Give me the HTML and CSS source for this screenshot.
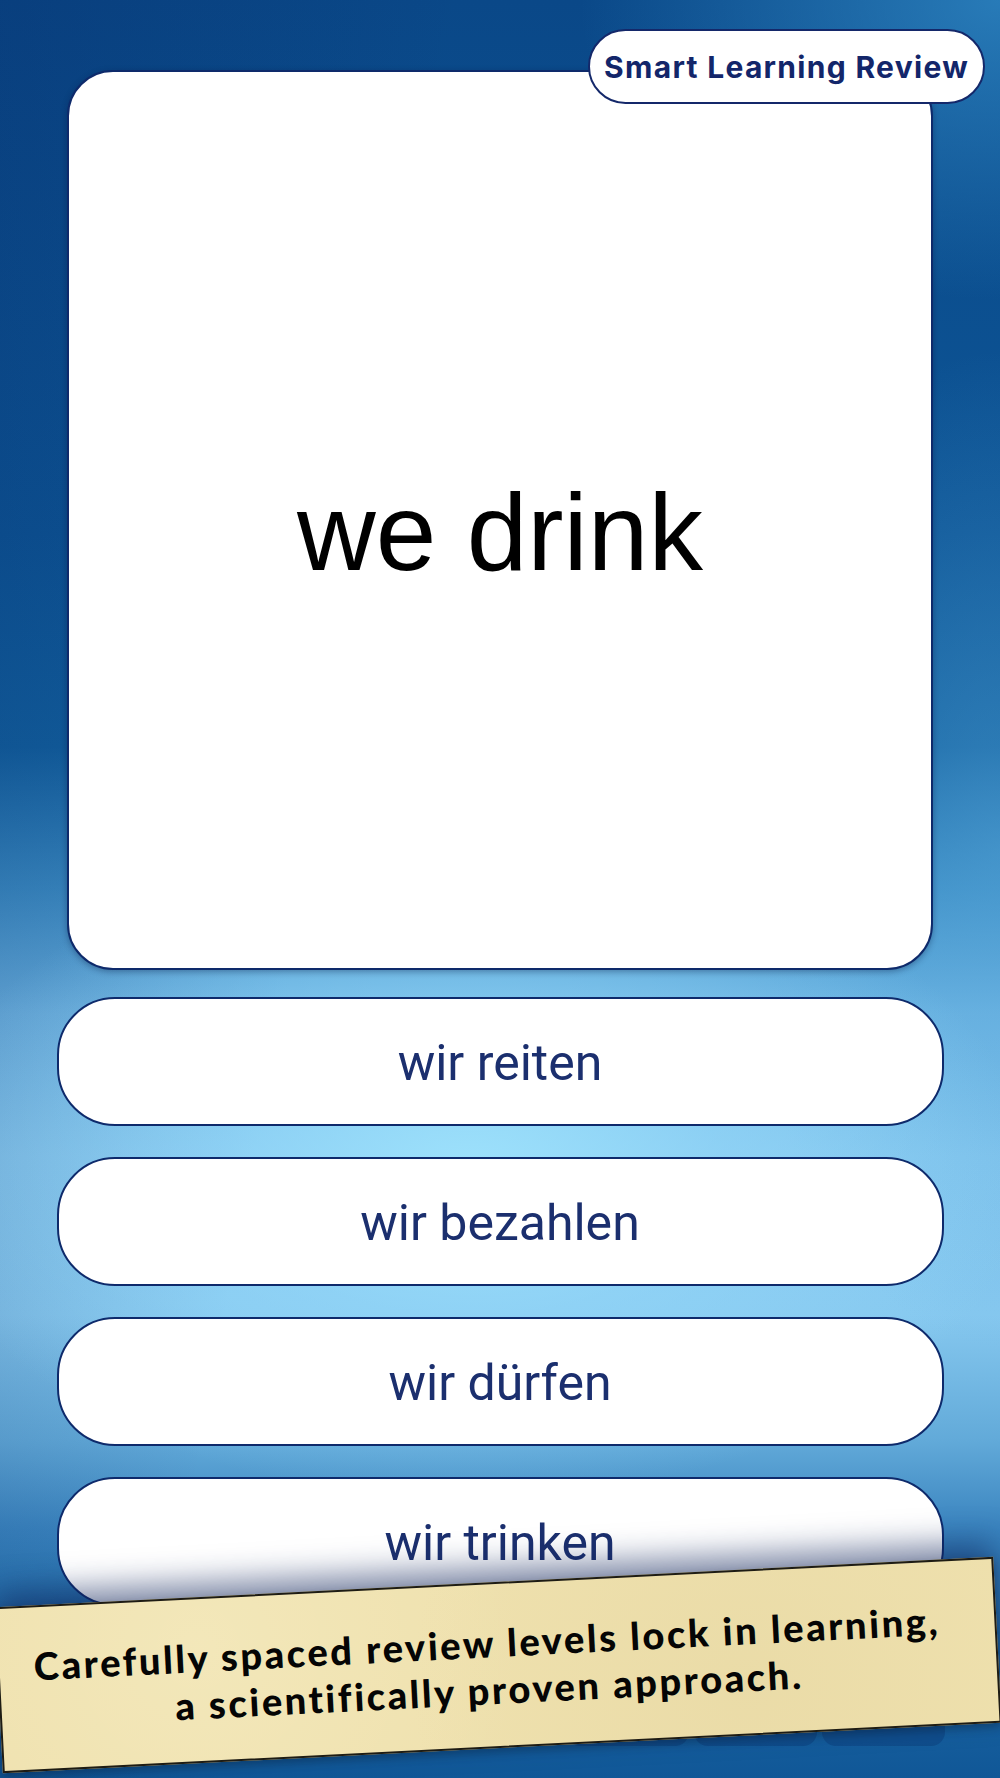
FILE: index.html
```html
<!DOCTYPE html>
<html lang="en">
<head>
<meta charset="utf-8">
<title>Smart Learning Review</title>
<link rel="stylesheet" href="styles.css">
</head>
<body>
<div class="screen">
  <div class="card">
    <div class="prompt">we drink</div>
  </div>
  <div class="badge">Smart Learning Review</div>
  <div class="options">
    <div class="option">wir reiten</div>
    <div class="option">wir bezahlen</div>
    <div class="option">wir dürfen</div>
    <div class="option">wir trinken</div>
  </div>
  <div class="tabbar">
    <span class="tab"></span><span class="tab"></span><span class="tab"></span><span class="tab"></span><span class="tab"></span><span class="tab"></span><span class="tab"></span>
  </div>
  <div class="note">
    <p>Carefully spaced review levels lock in learning,<br>a scientifically proven approach.</p>
  </div>
</div>
</body>
</html>
```

FILE: styles.css
```css
* { box-sizing: border-box; }
html, body { margin: 0; padding: 0; }
body { width: 1000px; height: 1778px; overflow: hidden; }

.screen {
  position: relative;
  width: 1000px;
  height: 1778px;
  overflow: hidden;
  display: flex;
  flex-direction: column;
  align-items: center;
  background:
    radial-gradient(ellipse 560px 330px at 470px 1170px, rgba(160, 228, 253, 0.9) 0%, rgba(150, 218, 250, 0.55) 45%, rgba(140, 210, 245, 0) 100%),
    radial-gradient(ellipse 420px 300px at 1000px 0px, rgba(50, 140, 200, 0.75) 0%, rgba(50, 140, 200, 0) 100%),
    radial-gradient(ellipse 260px 500px at 1000px 850px, rgba(90, 170, 220, 0.45) 0%, rgba(90, 170, 220, 0) 100%),
    linear-gradient(100deg, rgba(5, 35, 95, 0.25) 0%, rgba(5, 35, 95, 0) 35%),
    linear-gradient(180deg, #0a4888 0%, #0d5596 30%, #12609f 42%, #3b8cc4 50%, #6cb3e2 57%, #84c6ee 65%, #86c8ef 74%, #62aad9 81%, #3a84bf 86%, #1f6aa6 92%, #105797 100%);
  font-family: "Liberation Sans", Arial, sans-serif;
}

.card {
  width: 866px;
  height: 900px;
  margin-top: 70px;
  background: #ffffff;
  border: 2.5px solid #0e2a6b;
  border-radius: 46px;
  box-shadow: 0 2px 6px rgba(0, 20, 60, 0.35);
  display: flex;
  align-items: center;
  justify-content: center;
  padding-top: 26px;
}

.prompt {
  font-family: "Liberation Sans", Arial, sans-serif;
  font-size: 109px;
  line-height: 1.15;
  color: #000;
}

.badge {
  position: absolute;
  left: 588px;
  top: 29px;
  width: 397px;
  height: 75px;
  background: #fff;
  border: 2px solid #14286a;
  border-radius: 38px;
  display: flex;
  align-items: center;
  justify-content: center;
  font-family: Inter, "Liberation Sans", sans-serif;
  font-weight: 700;
  font-size: 30px;
  color: #13266a;
  letter-spacing: 1.3px;
  padding-top: 1px;
}

.options {
  margin-top: 27px;
  width: 887px;
  display: flex;
  flex-direction: column;
  gap: 31px;
}

.option {
  height: 129px;
  background: #fff;
  border: 2.5px solid #0e2a6b;
  border-radius: 58px;
  display: flex;
  align-items: center;
  justify-content: center;
  font-family: Roboto, "Liberation Sans", sans-serif;
  font-size: 50px;
  color: #1b2f6e;
  padding-top: 2px;
}

.tabbar {
  margin-top: 84px;
  width: 889px;
  height: 56px;
  display: flex;
  gap: 5px;
}

.tab {
  flex: 1;
  background: rgba(10, 50, 110, 0.35);
  border-radius: 14px;
}

.note {
  position: absolute;
  left: -2px;
  top: 1582px;
  width: 1000px;
  height: 166px;
  transform: rotate(-2.9deg);
  background:
    radial-gradient(circle at 20% 30%, rgba(255, 250, 220, 0.25), rgba(255, 250, 220, 0) 40%),
    radial-gradient(circle at 75% 70%, rgba(200, 180, 120, 0.12), rgba(200, 180, 120, 0) 45%),
    #efe1ae;
  border: 2px solid #1e1c14;
  box-shadow: 0 -14px 32px rgba(15, 35, 90, 0.55), 0 4px 10px rgba(0, 0, 0, 0.25);
  display: flex;
  align-items: center;
  justify-content: center;
}

.note p {
  margin: 0;
  text-align: center;
  font-family: Lato, "Open Sans", sans-serif;
  font-weight: 900;
  font-size: 38px;
  line-height: 47px;
  color: #050505;
  letter-spacing: 2.6px;
  padding-right: 20px;
  padding-top: 2px;
}
```
